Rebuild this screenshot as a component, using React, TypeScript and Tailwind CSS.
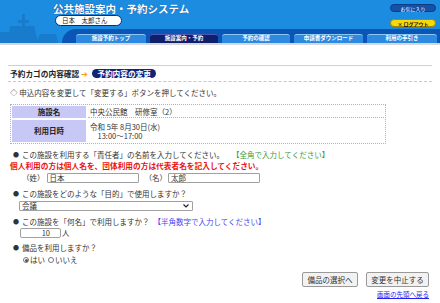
import React from "react";

const F = { fontFamily: '"Noto Sans CJK JP", "Noto Sans", sans-serif' };

function Tab({ label, active }: { label: string; active?: boolean }) {
  return (
    <div
      className={
        "h-[9px] flex items-center justify-center rounded-t-[3px] text-[5.5px] font-bold text-white leading-none " +
        (active
          ? "bg-[#101e6e] border-t border-[#4a5ab0]"
          : "bg-[#2d8ae0] border-t border-[#8cc8f4]")
      }
      style={{ width: 0 }}
    >
      {label}
    </div>
  );
}

export default function App() {
  const tabs: { label: string; w: string; active?: boolean }[] = [
    { label: "施設予約トップ", w: "w-[70px]" },
    { label: "施設案内・予約", w: "w-[68px]", active: true },
    { label: "予約の確認", w: "w-[68px]" },
    { label: "申請書ダウンロード", w: "w-[69px]" },
    { label: "利用の手引き", w: "w-[70px]" },
  ];
  return (
    <div className="w-[440px] h-[303px] bg-white overflow-hidden text-[#333]" style={F}>
      {/* header */}
      <div className="relative h-[43px] bg-[#1c8ce0] flex flex-col">
        <svg className="absolute left-0 top-0" width="60" height="43" viewBox="0 0 60 43">
          <g fill="#1878c8" opacity="0.8">
            <rect x="22" y="14" width="3" height="29" />
            <rect x="18" y="20" width="11" height="3" />
            <path d="M8 43 L10 26 L34 26 L38 43 Z" />
            <path d="M0 43 L0 32 L12 32 L14 43 Z" />
            <path d="M36 43 L40 34 L56 34 L58 43 Z" />
          </g>
        </svg>
        <div className="relative flex h-[29px]">
          <div className="pl-[53px] pt-[2px] flex flex-col">
            <div className="text-[10.5px] leading-[13px] font-bold text-white tracking-[0px] [text-shadow:0_0_1px_#0a3a80]">
              公共施設案内・予約システム
            </div>
            <div className="ml-[2px] mt-[0px] w-[67px] h-[11px] rounded-full bg-white border-[1.5px] border-[#0d2a80] flex items-center pl-[6px] text-[6.5px] leading-none text-[#222]">
              日本　太郎さん
            </div>
          </div>
          <div className="ml-auto mr-[4px] pt-[4px] flex flex-col items-end">
            <div className="w-[46px] h-[8px] rounded-full bg-[#1452a8] border border-[#0d3c86] flex items-center justify-center text-[5px] leading-none text-white">
              お気に入り
            </div>
            <div className="mt-[7px] w-[46px] h-[8px] rounded-full bg-[#f6d90a] border border-[#a08a00] flex items-center justify-center text-[5px] font-bold leading-none text-[#111]">
              × ログアウト
            </div>
          </div>
        </div>
        <div className="relative ml-[62px] h-[14px] bg-[#0b55b6] rounded-tl-[14px] flex items-end pl-[14px] gap-[4px]">
          {tabs.map((t) => (
            <div
              key={t.label}
              className={
                t.w +
                " h-[9px] flex items-center justify-center rounded-t-[3px] text-[5.5px] font-bold text-white leading-none " +
                (t.active
                  ? "bg-[#101e6e] border-t border-[#4a5ab0]"
                  : "bg-[#2d8ae0] border-t border-[#8cc8f4]")
              }
            >
              {t.label}
            </div>
          ))}
        </div>
      </div>
      <div className="h-[2px] bg-[#d8d8d8]" />

      {/* content */}
      <div className="px-[8px] pt-[20px] flex flex-col">
        <div className="border-t border-[#d0d0d0]" />
        <div className="h-[15px] flex items-center pl-[2px] text-[7.7px] leading-none">
          <span className="font-bold text-[#222]">予約カゴの内容確認</span>
          <span className="ml-[2px] text-[#f39a1a] text-[8px]">➔</span>
          <span className="ml-[4px] h-[9px] px-[5px] rounded-full bg-[#12237a] text-white font-bold flex items-center">
            予約内容の変更
          </span>
        </div>
        <div className="border-t border-dashed border-[#c8c8c8]" />
        <div className="h-[22px] flex items-center pl-[2px] text-[7.5px] leading-none">
          ◇ 申込内容を変更して「変更する」ボタンを押してください。
        </div>

        {/* table */}
        <div className="ml-[2px] w-[376px] border border-dotted border-[#b0b0c0] p-[1px] grid grid-cols-[74px_1fr] gap-x-[2px] gap-y-[2px] text-[7.5px] leading-none">
          <div className="h-[12px] bg-[#c8c8f6] flex items-center justify-center font-bold text-[#222]">
            施設名
          </div>
          <div className="h-[12px] border-b border-dotted border-[#b0b0c0] flex items-center pl-[2px]">
            中央公民館　研修室（2）
          </div>
          <div className="h-[22px] bg-[#c8c8f6] flex items-center justify-center font-bold text-[#222]">
            利用日時
          </div>
          <div className="h-[22px] flex flex-col justify-center pl-[2px] gap-[2px]">
            <div>令和 5年 8月30日(水)</div>
            <div>　13:00～17:00</div>
          </div>
        </div>

        <div className="mt-[5px] h-[12px] flex items-center pl-[5px] text-[7.5px] leading-none">
          <span className="text-[6px] mr-[3px]">●</span>
          この施設を利用する「責任者」の名前を入力してください。
          <span className="ml-[8px] text-[#3a9a3a]">【全角で入力してください】</span>
        </div>
        <div className="h-[10px] flex items-center pl-[2px] text-[7.7px] leading-none font-bold text-[#ee1111]">
          個人利用の方は個人名を、団体利用の方は代表者名を記入してください。
        </div>
        <div className="mt-[2px] h-[10px] flex items-center pl-[14px] text-[7.5px] leading-none">
          <span>（姓）</span>
          <div className="ml-[2px] w-[92px] h-[10px] border border-[#a0a0a0] rounded-[1px] flex items-center pl-[2px]">日本</div>
          <span className="ml-[6px]">（名）</span>
          <div className="ml-[1px] w-[92px] h-[10px] border border-[#a0a0a0] rounded-[1px] flex items-center pl-[2px]">太郎</div>
        </div>
        <div className="mt-[5px] h-[12px] flex items-center pl-[5px] text-[7.5px] leading-none">
          <span className="text-[6px] mr-[3px]">●</span>
          この施設をどのような「目的」で使用しますか？
        </div>
        <div className="mt-[1px] ml-[11px] w-[174px] h-[10px] border border-[#a0a0a0] rounded-[1px] flex items-center pl-[2px] pr-[3px] text-[7.5px] leading-none">
          <span>会議</span>
          <svg className="ml-auto" width="6" height="4" viewBox="0 0 6 4">
            <path d="M0.5 0.5 L3 3 L5.5 0.5" fill="none" stroke="#222" strokeWidth="1.2" />
          </svg>
        </div>
        <div className="mt-[5px] h-[12px] flex items-center pl-[5px] text-[7.5px] leading-none">
          <span className="text-[6px] mr-[3px]">●</span>
          この施設を「何名」で利用しますか？
          <span className="ml-[4px] text-[#4646f0]">【半角数字で入力してください】</span>
        </div>
        <div className="h-[10px] flex items-center pl-[12px] text-[7.5px] leading-none">
          <div className="w-[41px] h-[10px] border border-[#a0a0a0] rounded-[2px] flex items-center justify-end pr-[10px]">10</div>
          <span className="ml-[1px]">人</span>
        </div>
        <div className="mt-[4px] h-[12px] flex items-center pl-[5px] text-[7.5px] leading-none">
          <span className="text-[6px] mr-[3px]">●</span>
          備品を利用しますか？
        </div>
        <div className="h-[12px] flex items-center pl-[15px] text-[7.5px] leading-none">
          <span className="w-[6px] h-[6px] rounded-full border border-[#777] flex items-center justify-center">
            <span className="w-[3px] h-[3px] rounded-full bg-[#555]" />
          </span>
          <span className="ml-[1px]">はい</span>
          <span className="ml-[3px] w-[6px] h-[6px] rounded-full border border-[#777]" />
          <span className="ml-[1px]">いいえ</span>
        </div>
        <div className="mt-[6px] flex justify-end pr-[3px] gap-[8px] text-[7.5px] leading-none">
          <div className="w-[56px] h-[15px] border border-[#999] rounded-[2px] bg-[#f2f2f2] flex items-center justify-center">
            備品の選択へ
          </div>
          <div className="w-[63px] h-[15px] border border-[#999] rounded-[2px] bg-[#f2f2f2] flex items-center justify-center">
            変更を中止する
          </div>
        </div>
        <div className="mt-[2px] flex justify-end pr-[3px] text-[6.5px] leading-[10px]">
          <span className="text-[#2222ee] underline">画面の先頭へ戻る</span>
        </div>
      </div>
    </div>
  );
}
